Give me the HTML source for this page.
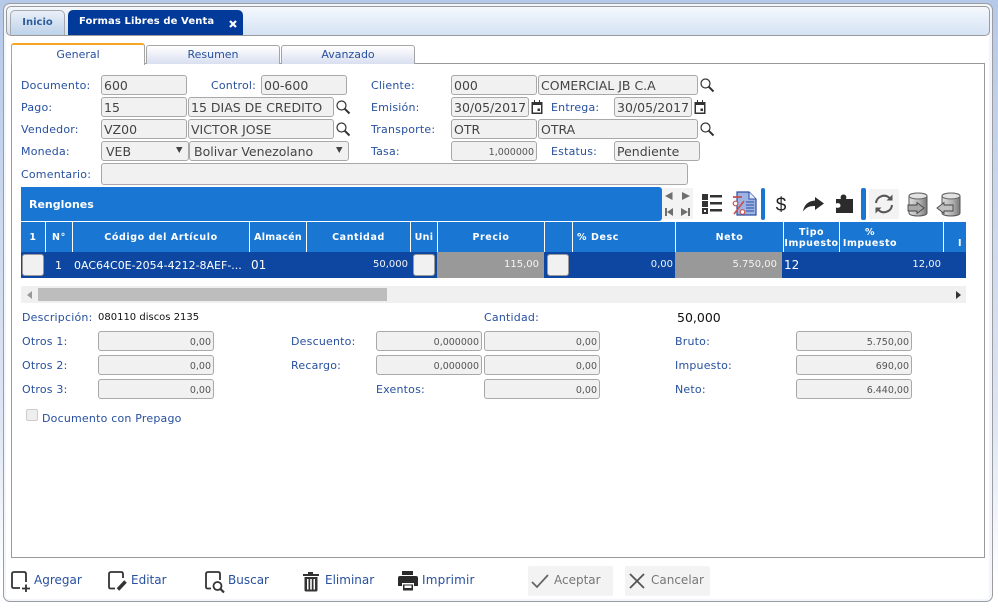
<!DOCTYPE html>
<html><head><meta charset="utf-8">
<style>
*{box-sizing:border-box}
html,body{margin:0;padding:0;width:998px;height:609px;overflow:hidden;background:linear-gradient(#b6c9e8,#dfe6f4 70%,#fff 96%);font-family:"DejaVu Sans","Liberation Sans",sans-serif}
.a{position:absolute}
#win{position:absolute;left:3px;top:3px;width:990px;height:599px;background:#f2f6fb;border:1px solid #9a9ea2;border-radius:7px;overflow:hidden}
#inner{position:absolute;left:6px;top:35px;width:983px;height:564px;background:#fff}
#hd{position:absolute;left:6px;top:6px;width:984px;height:30px;background:linear-gradient(#f4f8fd,#d5e3f4);border:1px solid #9a9a9a;border-radius:5px}
.t{position:absolute;font-size:11px;line-height:14px;letter-spacing:.2px;color:#27509f;white-space:nowrap;transform:translateY(1px)}
.i{position:absolute;height:20px;background:#f1f1f1;border:1px solid #a8a8a8;border-radius:3px;font-size:12.5px;line-height:19px;color:#444;padding:0 2px 0 2px;white-space:nowrap;overflow:hidden}
.n{text-align:right;font-size:9.5px;padding-right:2px;color:#555;line-height:21px}
.stab{position:absolute;top:45px;height:19px;width:134px;text-align:center;font-size:11px;line-height:17px;color:#27509f;background:linear-gradient(#fff,#d9dff0);border:1px solid #a5a5a5;border-bottom:none;border-radius:3px 3px 0 0}
.h{position:absolute;top:222px;height:30px;background:#1976d2;color:#fff;font-weight:bold;font-size:9.5px;line-height:31px;text-align:center;letter-spacing:.6px;white-space:nowrap;overflow:hidden}
.s{position:absolute;top:222px;width:1px;height:30px;background:#fff}
.c{position:absolute;top:252px;height:26px;line-height:26px;color:#fff;font-size:12px;white-space:nowrap}
.cn{font-size:10px;text-align:right;color:#f4f4f4}
.b{position:absolute;top:254px;width:22px;height:22px;background:#f1f1f1;border:1px solid #999;border-radius:3px}
svg{position:absolute;overflow:visible}
.bt{position:absolute;top:573px;font-size:12px;line-height:15px;color:#27509f}
</style></head><body>
<div id="win"></div>
<div id="inner"></div>
<div id="hd"></div>
<!-- top tabs -->
<div class="a" style="left:10px;top:10px;width:55px;height:25px;background:linear-gradient(#e9f0f8,#bdd2ea);border:1px solid #a5a9ad;border-bottom:none;border-radius:5px 5px 0 0;font-weight:bold;font-size:10px;color:#2e5c9c;text-align:center;line-height:24px">Inicio</div>
<div class="a" style="left:68px;top:10px;width:175px;height:25px;background:#023a99;border-radius:5px 5px 0 0;font-size:10px;letter-spacing:.1px;font-weight:bold;color:#fff;line-height:24px;padding-left:11px">Formas Libres de Venta</div>
<svg style="left:229px;top:20px" width="8" height="8"><path d="M1 1L7 7M7 1L1 7" stroke="#fff" stroke-width="2.2"/></svg>
<!-- content box -->
<div class="a" style="left:11px;top:63px;width:974px;height:495px;border:1px solid #999;background:#fff"></div>
<div class="a" style="left:11px;top:43px;width:134px;height:22px;background:#fff;border:1px solid #a5a5a5;border-top:2px solid #f5a623;border-bottom:none;border-radius:3px 3px 0 0;text-align:center;font-size:11px;line-height:20px;color:#27509f">General</div>
<div class="stab" style="left:146px">Resumen</div>
<div class="stab" style="left:281px">Avanzado</div>
<!-- form labels -->
<div class="t" style="left:21px;top:78px">Documento:</div>
<div class="t" style="left:211px;top:78px">Control:</div>
<div class="t" style="left:371px;top:78px">Cliente:</div>
<div class="t" style="left:21px;top:100px">Pago:</div>
<div class="t" style="left:371px;top:100px">Emisión:</div>
<div class="t" style="left:551px;top:100px">Entrega:</div>
<div class="t" style="left:21px;top:122px">Vendedor:</div>
<div class="t" style="left:371px;top:122px">Transporte:</div>
<div class="t" style="left:21px;top:144px">Moneda:</div>
<div class="t" style="left:371px;top:144px">Tasa:</div>
<div class="t" style="left:551px;top:144px">Estatus:</div>
<div class="t" style="left:21px;top:167px">Comentario:</div>
<!-- inputs -->
<div class="i" style="left:101px;top:75px;width:86px">600</div>
<div class="i" style="left:261px;top:75px;width:86px">00-600</div>
<div class="i" style="left:451px;top:75px;width:86px">000</div>
<div class="i" style="left:538px;top:75px;width:160px">COMERCIAL JB C.A</div>
<div class="i" style="left:101px;top:97px;width:86px">15</div>
<div class="i" style="left:188px;top:97px;width:146px">15 DIAS DE CREDITO</div>
<div class="i" style="left:451px;top:97px;width:78px">30/05/2017</div>
<div class="i" style="left:614px;top:97px;width:78px">30/05/2017</div>
<div class="i" style="left:101px;top:119px;width:86px">VZ00</div>
<div class="i" style="left:188px;top:119px;width:146px">VICTOR JOSE</div>
<div class="i" style="left:451px;top:119px;width:86px">OTR</div>
<div class="i" style="left:538px;top:119px;width:160px">OTRA</div>
<div class="i" style="left:101px;top:141px;width:88px;padding-left:4px">VEB</div>
<div class="i" style="left:189px;top:141px;width:160px;padding-left:4px">Bolivar Venezolano</div>
<svg style="left:176px;top:146px" width="7" height="8"><path d="M0 1H6.500L3.250 7Z" fill="#444"/></svg>
<svg style="left:336px;top:146px" width="7" height="8"><path d="M0 1H6.500L3.250 7Z" fill="#444"/></svg>
<div class="i n" style="left:451px;top:141px;width:86px">1,000000</div>
<div class="i" style="left:614px;top:141px;width:86px">Pendiente</div>
<div class="i" style="left:101px;top:163px;width:587px;height:22px"></div>
<!-- search icons -->
<svg style="left:336px;top:100px" width="14" height="14" fill="none" stroke="#333"><circle cx="5.500" cy="5.500" r="4.500" stroke-width="1.200"/><path d="M8.800 8.800L13.500 13.500" stroke-width="2"/></svg>
<svg style="left:336px;top:122px" width="14" height="14" fill="none" stroke="#333"><circle cx="5.500" cy="5.500" r="4.500" stroke-width="1.200"/><path d="M8.800 8.800L13.500 13.500" stroke-width="2"/></svg>
<svg style="left:700px;top:78px" width="14" height="14" fill="none" stroke="#333"><circle cx="5.500" cy="5.500" r="4.500" stroke-width="1.200"/><path d="M8.800 8.800L13.500 13.500" stroke-width="2"/></svg>
<svg style="left:700px;top:122px" width="14" height="14" fill="none" stroke="#333"><circle cx="5.500" cy="5.500" r="4.500" stroke-width="1.200"/><path d="M8.800 8.800L13.500 13.500" stroke-width="2"/></svg>
<!-- calendars -->
<svg style="left:531px;top:100px" width="12" height="14"><path fill-rule="evenodd" d="M1 2H3V0H4V2H8V0H9V2H11.500V14H0.500V2ZM2 5V12.500H10V5ZM6.500 8.500H9V11H6.500Z" fill="#333"/></svg>
<svg style="left:694px;top:100px" width="12" height="14"><path fill-rule="evenodd" d="M1 2H3V0H4V2H8V0H9V2H11.500V14H0.500V2ZM2 5V12.500H10V5ZM6.500 8.500H9V11H6.500Z" fill="#333"/></svg>
<!-- title bar -->
<div class="a" style="left:21px;top:187px;width:641px;height:34px;background:#1976d2;border-radius:0 3px 3px 0;color:#fff;font-weight:bold;font-size:11px;line-height:35px;padding-left:8px">Renglones</div>
<!-- toolbar -->
<div class="a" style="left:662px;top:188px;width:31px;height:31px;background:#f3f3f3"></div>
<svg style="left:662px;top:188px" width="31" height="31" fill="#6e6e6e"><path d="M3 8L10.500 4V12Z"/><path d="M20 4L28 8L20 12Z"/><path d="M3 20H5V28H3ZM11 20V28L5 24Z"/><path d="M19 20L26 24L19 28ZM26 20H28V28H26Z"/></svg>
<svg style="left:702px;top:194px" width="20" height="20" fill="#333"><path d="M0 0H6V6H0ZM8 1H20V3.500H8ZM0 7H6V13H0ZM8 8H20V10.500H8ZM8 15H20V17.500H8Z"/><path fill-rule="evenodd" d="M0 14H6V20H0ZM2 16V18H4V16Z"/></svg>
<svg style="left:732px;top:191px" width="25" height="26"><path d="M5 1H17L24 8V24H5Z" fill="#9db3e4" stroke="#2d4ea0" stroke-width="1.200"/><path d="M17 1V8H24" fill="#e3eafa" stroke="#2d4ea0"/><path d="M14 11H22M14 14H22M14 17H22M14 20H22" stroke="#2d4ea0"/><path d="M1 6H10" stroke="#c9504f" stroke-width="1.800"/><path d="M12 10L2 23" stroke="#c9504f" stroke-width="1.600"/><circle cx="3.500" cy="12.500" r="2.300" fill="#fff" stroke="#c9504f" stroke-width="1.200"/><circle cx="10.500" cy="21" r="2.300" fill="#fff" stroke="#c9504f" stroke-width="1.200"/></svg>
<div class="a" style="left:761px;top:188px;width:4px;height:32px;background:#1976d2;border-radius:2px"></div>
<div class="a" style="left:773px;top:193px;width:16px;text-align:center;font-size:19px;line-height:26px;color:#222;font-family:'Liberation Sans',sans-serif">$</div>
<svg style="left:803px;top:197px" width="21" height="15"><path d="M12 0L21 6.500L12 13V9C6 9 3 10.500 0 14.500C1 8 5 4 12 3.500Z" fill="#2b2b2b"/></svg>
<svg style="left:836px;top:194px" width="17" height="19"><path d="M0 5H5C4 3 5 0.500 7.500 0.500S11 3 10 5H17V19H0V13.500C3 14.500 4.500 13 4.500 11.500S3 8.500 0 9.500Z" fill="#2b2b2b"/></svg>
<div class="a" style="left:861px;top:188px;width:5px;height:32px;background:#1976d2;border-radius:2px"></div>
<div class="a" style="left:869px;top:189px;width:30px;height:30px;background:#f3f3f3;border-radius:2px"></div>
<svg style="left:874px;top:194px" width="20" height="20" fill="none" stroke="#555" stroke-width="2"><path d="M2 9A8 8 0 0 1 15.500 4"/><path d="M18 11A8 8 0 0 1 4.500 16"/><path d="M18.500 0.500V6.500H12.500Z" fill="#555" stroke="none"/><path d="M1.500 19.500V13.500H7.500Z" fill="#555" stroke="none"/></svg>
<svg style="left:907px;top:191px" width="24" height="26"><defs><linearGradient id="g"><stop offset="0" stop-color="#ddd"/><stop offset=".6" stop-color="#b0b0b0"/><stop offset="1" stop-color="#777"/></linearGradient></defs><path d="M2 5C2 1 20 1 20 5V22C20 26 2 26 2 22Z" fill="url(#g)" stroke="#555"/><ellipse cx="11" cy="5" rx="9" ry="3" fill="#e2e2e2" stroke="#666"/><path d="M1 14H10V11.500L17 17L10 22.500V20H1Z" fill="#a8a8a8" stroke="#444" stroke-width=".9"/></svg>
<svg style="left:939px;top:191px" width="24" height="26"><path d="M3 5C3 1 21 1 21 5V22C21 26 3 26 3 22Z" fill="url(#g)" stroke="#555"/><ellipse cx="12" cy="5" rx="9" ry="3" fill="#e2e2e2" stroke="#666"/><path d="M14 14H5V11.500L-2 17L5 22.500V20H14Z" fill="#c0c0c0" stroke="#444" stroke-width=".9"/></svg>
<!-- table head -->
<div class="h" style="left:21px;width:945px"></div>
<div class="h" style="left:21px;width:24px">1</div>
<div class="h" style="left:46px;width:26px">N°</div>
<div class="h" style="left:73px;width:176px">Código del Artículo</div>
<div class="h" style="left:250px;width:56px;letter-spacing:.3px">Almacén</div>
<div class="h" style="left:307px;width:103px">Cantidad</div>
<div class="h" style="left:411px;width:26px;letter-spacing:.3px">Uni</div>
<div class="h" style="left:438px;width:106px">Precio</div>
<div class="h" style="left:573px;width:50px">% Desc</div>
<div class="h" style="left:676px;width:107px">Neto</div>
<div class="h" style="left:784px;width:55px;line-height:11px;padding-top:5px;overflow:visible;letter-spacing:.5px">Tipo<br>Impuesto</div>
<div class="h" style="left:842px;width:56px;line-height:11px;padding-top:5px;background:none;overflow:visible;letter-spacing:.5px">%<br>Impuesto</div>
<div class="h" style="left:958px;width:8px;padding-top:6px;background:none;text-align:left">I</div>
<div class="s" style="left:45px"></div><div class="s" style="left:72px"></div><div class="s" style="left:249px"></div><div class="s" style="left:306px"></div><div class="s" style="left:410px"></div><div class="s" style="left:437px"></div><div class="s" style="left:544px"></div><div class="s" style="left:572px"></div><div class="s" style="left:675px"></div><div class="s" style="left:783px"></div><div class="s" style="left:839px"></div><div class="s" style="left:943px"></div>
<!-- row -->
<div class="a" style="left:21px;top:252px;width:945px;height:26px;background:#0d47a1"></div>
<div class="a" style="left:437px;top:252px;width:107px;height:26px;background:#999"></div>
<div class="a" style="left:675px;top:252px;width:107px;height:26px;background:#999"></div>
<div class="b" style="left:22px"></div><div class="b" style="left:413px"></div><div class="b" style="left:547px"></div>
<div class="c" style="left:55px;font-size:11px;line-height:27px">1</div>
<div class="c" style="left:74px;font-size:11px;line-height:27px">0AC64C0E-2054-4212-8AEF-...</div>
<div class="c" style="left:251px">01</div>
<div class="c cn" style="left:320px;width:88px">50,000</div>
<div class="c cn" style="left:445px;width:94px">115,00</div>
<div class="c cn" style="left:580px;width:93px">0,00</div>
<div class="c cn" style="left:680px;width:97px">5.750,00</div>
<div class="c" style="left:784px">12</div>
<div class="c cn" style="left:850px;width:91px">12,00</div>
<!-- scrollbar -->
<div class="a" style="left:21px;top:286px;width:945px;height:17px;background:#f0f0f0"></div>
<div class="a" style="left:38px;top:288px;width:349px;height:13px;background:#bdbdbd"></div>
<svg style="left:27px;top:291px" width="6" height="8"><path d="M5 0V8L0 4Z" fill="#999"/></svg>
<svg style="left:956px;top:291px" width="6" height="8"><path d="M0 0V8L5 4Z" fill="#333"/></svg>
<!-- details -->
<div class="t" style="left:22px;top:310px">Descripción:</div>
<div class="t" style="left:98px;top:310px;color:#111;font-size:10px;letter-spacing:0">080110 discos 2135</div>
<div class="t" style="left:484px;top:310px">Cantidad:</div>
<div class="t" style="left:677px;top:310px;color:#111;font-size:12.5px;letter-spacing:0">50,000</div>
<div class="t" style="left:22px;top:334px">Otros 1:</div>
<div class="t" style="left:22px;top:358px">Otros 2:</div>
<div class="t" style="left:22px;top:382px">Otros 3:</div>
<div class="t" style="left:291px;top:334px">Descuento:</div>
<div class="t" style="left:291px;top:358px">Recargo:</div>
<div class="t" style="left:376px;top:382px">Exentos:</div>
<div class="t" style="left:675px;top:334px">Bruto:</div>
<div class="t" style="left:675px;top:358px">Impuesto:</div>
<div class="t" style="left:675px;top:382px">Neto:</div>
<div class="i n" style="left:98px;top:331px;width:116px">0,00</div>
<div class="i n" style="left:98px;top:355px;width:116px">0,00</div>
<div class="i n" style="left:98px;top:379px;width:116px">0,00</div>
<div class="i n" style="left:376px;top:331px;width:106px">0,000000</div>
<div class="i n" style="left:376px;top:355px;width:106px">0,000000</div>
<div class="i n" style="left:484px;top:331px;width:116px">0,00</div>
<div class="i n" style="left:484px;top:355px;width:116px">0,00</div>
<div class="i n" style="left:484px;top:379px;width:116px">0,00</div>
<div class="i n" style="left:796px;top:331px;width:116px">5.750,00</div>
<div class="i n" style="left:796px;top:355px;width:116px">690,00</div>
<div class="i n" style="left:796px;top:379px;width:116px">6.440,00</div>
<div class="a" style="left:26px;top:409px;width:12px;height:12px;background:#eee;border:1px solid #ccc;border-radius:2px"></div>
<div class="t" style="left:42px;top:411px">Documento con Prepago</div>
<!-- bottom buttons -->
<svg style="left:11px;top:571px" width="20" height="22" fill="none" stroke="#333" stroke-width="1.800"><path d="M9 17H2.500Q1 17 1 15.500V3Q1 1 3 1H13Q15 1 15 3V11"/><path d="M15 13.500V21M11 17.500H19"/></svg>
<div class="bt" style="left:34px">Agregar</div>
<svg style="left:108px;top:571px" width="20" height="22" fill="none" stroke="#333" stroke-width="1.800"><path d="M7 17.500H2.500Q1 17.500 1 16V3Q1 1 3 1H13Q15 1 15 3V7"/><path d="M10 18.500L17.500 10.500" stroke-width="3.500"/></svg>
<div class="bt" style="left:131px">Editar</div>
<svg style="left:205px;top:571px" width="20" height="22" fill="none" stroke="#333" stroke-width="1.800"><path d="M6 17.500H2.500Q1 17.500 1 16V3Q1 1 3 1H13Q15 1 15 3V9"/><circle cx="12.500" cy="15" r="4"/><path d="M15.500 18L19 21.500" stroke-width="2.200"/></svg>
<div class="bt" style="left:228px">Buscar</div>
<svg style="left:302px;top:571px" width="18" height="21"><path d="M1 3H6V1H11V3H17V5H1Z" fill="#333"/><path fill-rule="evenodd" d="M2.500 6H15.500V19Q15.500 20.500 14 20.500H4Q2.500 20.500 2.500 19ZM5 8V18.500H6.500V8ZM8.200 8V18.500H9.800V8ZM11.500 8V18.500H13V8Z" fill="#333"/></svg>
<div class="bt" style="left:325px">Eliminar</div>
<svg style="left:398px;top:571px" width="20" height="20"><path d="M4 0H15V4H4Z" fill="#2b2b2b"/><path fill-rule="evenodd" d="M2 5H18Q20 5 20 7V15H16V12H4V15H0V7Q0 5 2 5Z" fill="#2b2b2b"/><path d="M5 13.500H15V19.500H5Z" fill="#2b2b2b"/><path d="M6.500 14.500H13.500V17H6.500Z" fill="#fff"/></svg>
<div class="bt" style="left:422px;letter-spacing:.2px">Imprimir</div>
<div class="a" style="left:528px;top:566px;width:85px;height:30px;background:#f3f3f3;border-radius:2px"></div>
<svg style="left:531px;top:574px" width="18" height="14" fill="none" stroke="#666" stroke-width="1.800"><path d="M1 8L6 13L17 1"/></svg>
<div class="bt" style="left:554px;color:#777">Aceptar</div>
<div class="a" style="left:625px;top:566px;width:85px;height:30px;background:#f3f3f3;border-radius:2px"></div>
<svg style="left:629px;top:573px" width="16" height="16" fill="none" stroke="#555" stroke-width="1.800"><path d="M1 1L15 15M15 1L1 15"/></svg>
<div class="bt" style="left:651px;color:#777">Cancelar</div>
</body></html>
